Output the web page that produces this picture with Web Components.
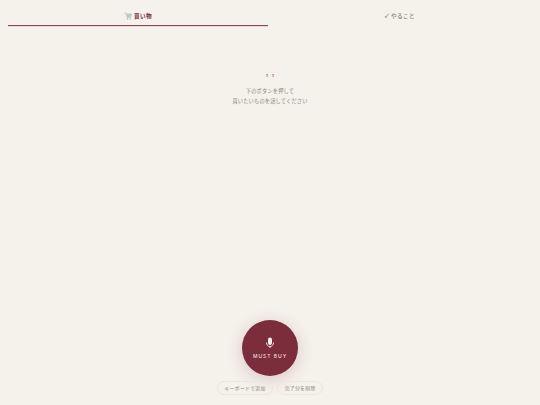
<!DOCTYPE html>
<html lang="ja"><head><meta charset="utf-8">
<style>
html,body{margin:0;height:100%;background:#f5f1eb;font-family:"Noto Sans CJK JP","Noto Sans",sans-serif;}
body{height:405px;overflow:hidden}
</style></head><body>
<app-shell>
  <tab-bar slot="tabs">
    <tab-item active><svg slot="icon" width="8" height="8" viewBox="0 0 16 16"><path d="M1 2h3l2 9h7l2-7H5" fill="#b9ced2" stroke="#a9c0c6" stroke-width="1.2"/><circle cx="7" cy="14" r="1.4" fill="#a9b5b8"/><circle cx="12.5" cy="14" r="1.4" fill="#a9b5b8"/></svg>買い物</tab-item>
    <tab-item>✓ やること</tab-item>
  </tab-bar>
  <empty-state slot="main"><span slot="mark">’ ’</span>下のボタンを押して<br>買いたいものを話してください</empty-state>
  <mic-button slot="mic">MUST BUY</mic-button>
  <pill-row slot="actions">
    <pill-button>キーボードで追加</pill-button>
    <pill-button>完了分を削除</pill-button>
  </pill-row>
</app-shell>
<script>
function def(name, css, html){
  customElements.define(name, class extends HTMLElement{
    constructor(){super();this.attachShadow({mode:'open'}).innerHTML='<style>'+css+'</style>'+html;}
  });
}
def('app-shell',`:host{display:flex;flex-direction:column;height:405px;box-sizing:border-box;padding:0 8px 10px}
.main{flex:1;display:flex;flex-direction:column;min-height:0}
.foot{display:flex;flex-direction:column;align-items:center;gap:5px}`,
`<slot name="tabs"></slot><div class="main"><slot name="main"></slot></div><div class="foot"><slot name="mic"></slot><slot name="actions"></slot></div>`);
def('tab-bar',`:host{display:grid;grid-template-columns:260px 1fr;height:26px}`,`<slot></slot>`);
def('tab-item',`:host{display:flex;align-items:center;justify-content:center;gap:2px;height:26px;box-sizing:border-box;padding-top:7px;font-size:5.6px;font-weight:500;letter-spacing:.45px;color:#8a8178;border-bottom:1px solid transparent}
:host([active]){color:#7b2d3b;font-weight:700;border-bottom:1px solid #8d4358;box-shadow:0 1px 0 -0.5px #e3b9c2}`,`<slot name="icon"></slot><slot></slot>`);
def('empty-state',`:host{display:flex;flex-direction:column;align-items:center;padding-top:47px;font-size:5.2px;line-height:10px;letter-spacing:.2px;color:#8d857c;text-align:center}
.mark{font:12px/10px "Liberation Serif",serif;letter-spacing:0;color:#c66a7c;margin-bottom:3px}`,`<div class="mark"><slot name="mark"></slot></div><div><slot></slot></div>`);
def('mic-button',`:host{display:flex;flex-direction:column;align-items:center;justify-content:center;gap:4px;width:56px;height:56px;border-radius:50%;background:#7b2d3b;box-shadow:0 3px 16px rgba(123,45,59,.22);color:#f0dcdc;font:500 5px "Inter","Noto Sans",sans-serif;letter-spacing:.95px;box-sizing:border-box;padding-top:1px}
svg{display:block;margin-top:-1px}`,`<svg width="10" height="12" viewBox="0 0 10 12"><rect x="3" y="0.5" width="4" height="7.5" rx="2" fill="#f7eeee"/><path d="M1.5 5.5c0 2.4 1.4 4 3.5 4s3.5-1.6 3.5-4" fill="none" stroke="#f3dede" stroke-width="1"/><path d="M5 9.5v1.6" stroke="#f3dede" stroke-width="1"/></svg><div><slot></slot></div>`);
def('pill-row',`:host{display:flex;gap:4px;justify-content:center}`,`<slot></slot>`);
def('pill-button',`:host{display:block;height:14px;line-height:12.5px;box-sizing:border-box;padding:0 6.5px;border:1px solid #ebe6de;border-radius:8px;font-size:4.8px;letter-spacing:.35px;color:#8d857c;white-space:nowrap}`,`<slot></slot>`);
</script>
</body></html>
